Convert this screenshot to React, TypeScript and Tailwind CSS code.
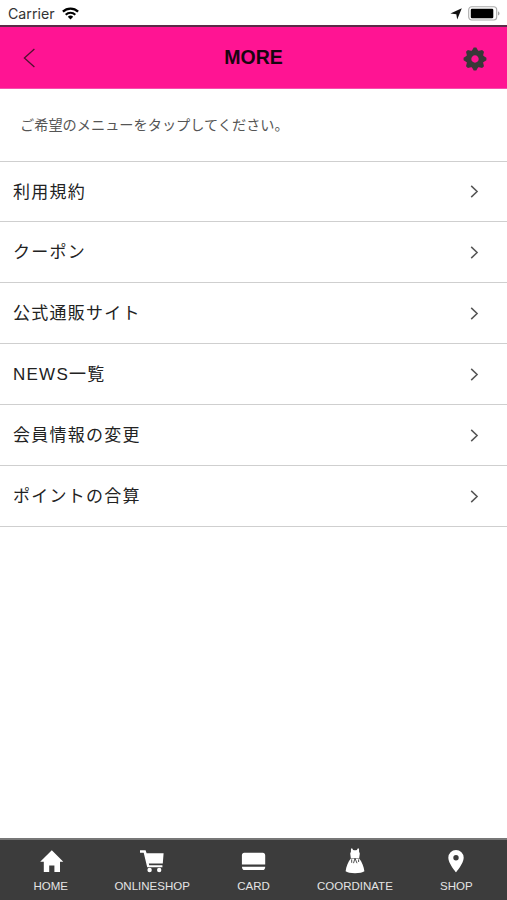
import type { ReactNode } from "react";

const MENU_ITEMS = [
  "利用規約",
  "クーポン",
  "公式通販サイト",
  "NEWS一覧",
  "会員情報の変更",
  "ポイントの合算",
];

interface TabItem {
  label: string;
  icon: ReactNode;
}

/* ── Tab icons (24x24 grid) ── */
const TABS: TabItem[] = [
  {
    label: "HOME",
    icon: <path d="M12.800.3 24.300 11.800H21V22h-5.600v-6.500h-5.200V22H4.800V11.800H1.200z" />,
  },
  {
    label: "ONLINESHOP",
    icon: (
      <>
        <path d="M0 .3h5.600l1 2.900h17L22.800 13.600H8.800l.4 1.600h13.200v2H7.200L3.700 2.700H0z" />
        <circle cx="9.600" cy="20" r="2.200" />
        <circle cx="19.200" cy="20" r="2.200" />
      </>
    ),
  },
  {
    label: "CARD",
    icon: (
      <>
        <path d="M2.200 2.800h18.600c1.400 0 2.400 1 2.400 2.400v9.300H-.1V5.200c0-1.400 1-2.400 2.300-2.400z" />
        <path d="M0 16.700h23.200c0 2.200-1 3.400-2.600 3.400h-18C1 20.100 0 18.900 0 16.700z" />
      </>
    ),
  },
  {
    label: "COORDINATE",
    icon: (
      <>
        <path d="M8-1.400h1.300l.8 1.300q1.900.7 3.800 0l.8-1.300H16l.1 3.200.7 1.800-.6 4.300H7.800l-.6-4.300.7-1.800z" />
        <path d="M7.800 8.600h8.400c2.800 3.600 4.600 7.900 5.200 12.700-2.600 2.500-16.200 2.500-18.800 0 .6-4.800 2.400-9.100 5.200-12.700z" />
        <path
          d="M8.700 9.400v3.400M12 8.300l-1.500 4.900M12 8.300l2 4.900M15.600 9.400v2.600"
          fill="none"
          stroke="#3c3c3c"
          strokeWidth=".9"
        />
      </>
    ),
  },
  {
    label: "SHOP",
    icon: (
      <path
        fillRule="evenodd"
        d="M12 0a7.700 7.700 0 0 0-7.700 7.700C4.300 13.400 12 22.300 12 22.300s7.700-8.900 7.700-14.600A7.700 7.700 0 0 0 12 0zm0 5a2.700 2.700 0 1 1 0 5.400A2.700 2.700 0 0 1 12 5z"
      />
    ),
  },
];

function StatusBar() {
  return (
    <div className="flex h-[25px] items-center justify-between pt-0.5 pr-[7px] pl-2">
      <div className="flex items-center gap-[7px]">
        <span className="font-['Inter','Liberation_Sans',sans-serif] text-[14.200px] leading-4 text-[#333]">
          Carrier
        </span>
        <svg className="h-[13px] w-[17px]" viewBox="0 0 17 13" fill="none" stroke="#000">
          <path d="M.9 4.700a11 11 0 0 1 15.200 0" strokeWidth="2.300" />
          <path d="M3.700 7.700a7 7 0 0 1 9.600 0" strokeWidth="2.100" />
          <path d="M8.500 12.400 5.800 9.800a3.900 3.900 0 0 1 5.400 0z" fill="#000" stroke="none" />
        </svg>
      </div>
      <div className="flex items-center gap-[6px]">
        <svg className="h-3 w-3" viewBox="0 0 12 12">
          <path d="M11.800.2 7.200 11.600 6.300 6.300.4 5.600z" fill="#111" />
        </svg>
        <svg className="h-[15px] w-8" viewBox="0 0 32 15">
          <rect x=".7" y=".8" width="28" height="13.200" rx="3" fill="#fff" stroke="#aaa" strokeWidth="1.100" />
          <rect x="2.800" y="2.700" width="22.500" height="9.500" rx="1.200" fill="#000" />
          <path d="M30.100 5.200v4.400q1.400-.8 1.400-2.200t-1.400-2.200z" fill="#999" />
        </svg>
      </div>
    </div>
  );
}

function GearIcon() {
  return (
    <svg className="mt-[3px] h-[24px] w-[24px]" viewBox="-12 -12 24 24">
      <g fill="#383838">
        {[0, 45, 90, 135, 180, 225, 270, 315].map((angle) => (
          <path key={angle} d="M-3.400-7.800-1.300-11.400H1.300L3.400-7.800z" transform={`rotate(${angle})`} />
        ))}
      </g>
      <circle r="6.300" fill="none" stroke="#383838" strokeWidth="5.200" />
    </svg>
  );
}

function Header() {
  return (
    <header className="flex h-[64px] items-center justify-between border-t-2 border-b border-t-[#5b2b48] border-b-[#f64fae] bg-[#ff1493] pr-[20px] pl-[23px]">
      <button className="w-[21px]" aria-label="戻る">
        <svg className="h-5 w-3" viewBox="0 0 12 20" fill="none" stroke="#50102f" strokeWidth="1.300">
          <path d="M11.400 1 1.400 10l10 9" />
        </svg>
      </button>
      <h1 className="pt-px text-[19.500px] font-bold text-[#180510]">MORE</h1>
      <button aria-label="設定">
        <GearIcon />
      </button>
    </header>
  );
}

function MenuRow({ label }: { label: string }) {
  return (
    <li className="flex h-[61px] items-center justify-between border-b border-[#cfcfcf] pr-7 pl-[13px] first:h-[60px]">
      <span className="pt-[2px] text-[17px] tracking-[1.250px] text-[#222]">{label}</span>
      <svg className="h-[13px] w-[9px]" viewBox="0 0 9 13" fill="none" stroke="#555" strokeWidth="1.500">
        <path d="m1.200.9 5.900 5.600-5.900 5.600" />
      </svg>
    </li>
  );
}

function TabBar() {
  return (
    <nav className="flex h-[62px] border-t-2 border-[#777] bg-[#3c3c3c]">
      {TABS.map(({ label, icon }) => (
        <button key={label} className="flex flex-1 basis-0 flex-col items-center pt-[10px]">
          <svg className="h-6 w-6 overflow-visible" viewBox="0 0 24 24" fill="#fff">
            {icon}
          </svg>
          <span className="mt-1 text-[11.500px] leading-4 text-[#e4e4e4]">{label}</span>
        </button>
      ))}
    </nav>
  );
}

export default function App() {
  return (
    <div className="flex h-screen flex-col bg-white font-['Liberation_Sans','Noto_Sans_CJK_JP',sans-serif]">
      <StatusBar />
      <Header />
      <main className="flex-1">
        <p className="flex h-[73px] items-center border-b border-[#cfcfcf] pt-[2px] pl-5 text-[14.200px] text-[#555]">
          ご希望のメニューをタップしてください。
        </p>
        <ul>
          {MENU_ITEMS.map((label) => (
            <MenuRow key={label} label={label} />
          ))}
        </ul>
      </main>
      <TabBar />
    </div>
  );
}
